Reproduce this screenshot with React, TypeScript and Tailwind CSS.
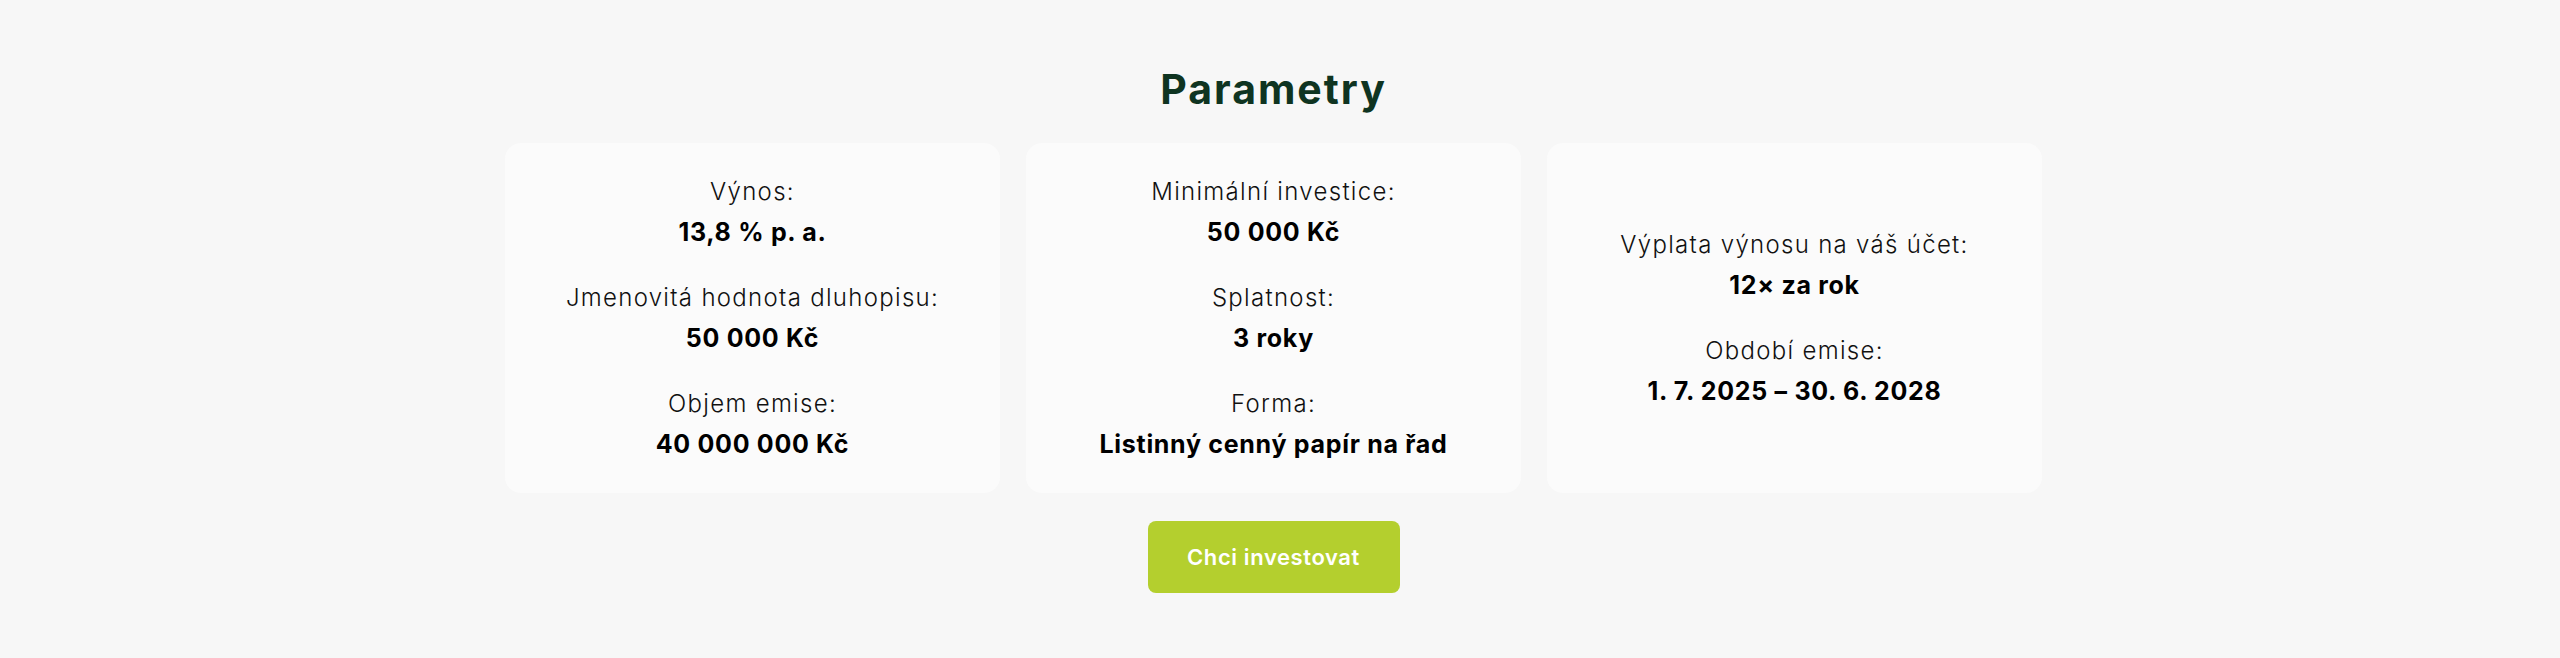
import React from "react";

type Item = { label: string; value: string };

const cards: Item[][] = [
  [
    { label: "Výnos:", value: "13,8 % p. a." },
    { label: "Jmenovitá hodnota dluhopisu:", value: "50 000 Kč" },
    { label: "Objem emise:", value: "40 000 000 Kč" },
  ],
  [
    { label: "Minimální investice:", value: "50 000 Kč" },
    { label: "Splatnost:", value: "3 roky" },
    { label: "Forma:", value: "Listinný cenný papír na řad" },
  ],
  [
    { label: "Výplata výnosu na váš účet:", value: "12× za rok" },
    { label: "Období emise:", value: "1. 7. 2025 – 30. 6. 2028" },
  ],
];

export default function App() {
  return (
    <div
      className="min-h-[658px] w-full bg-[#f7f7f7] pr-[13px]"
      style={{ fontFamily: "Inter, 'Noto Sans', sans-serif" }}
    >
      <div className="flex flex-col items-center pt-[65px] pb-[65px]">
        <h2 className="text-[41px] leading-[48px] font-bold text-[#0f3421] tracking-[2px]">
          Parametry
        </h2>
        <div className="mt-[30px] grid w-[1537px] grid-cols-3 gap-[26px]">
          {cards.map((items, i) => (
            <div
              key={i}
              className="flex h-[350px] flex-col items-center justify-center gap-[26px] rounded-2xl bg-[#fbfbfb] px-6"
            >
              {items.map((it) => (
                <div key={it.label} className="flex flex-col items-center text-center">
                  <div className="text-[24px] leading-[40px] font-light text-[#111111] tracking-[1.3px]">
                    {it.label}
                  </div>
                  <div className="text-[25px] leading-[40px] font-bold text-black tracking-[0.7px]">
                    {it.value}
                  </div>
                </div>
              ))}
            </div>
          ))}
        </div>
        <button className="mt-[28px] flex h-[72px] w-[252px] items-center justify-center rounded-lg bg-[#b4cf2e] text-[22px] font-semibold tracking-[0.6px] text-white">
          Chci investovat
        </button>
      </div>
    </div>
  );
}
